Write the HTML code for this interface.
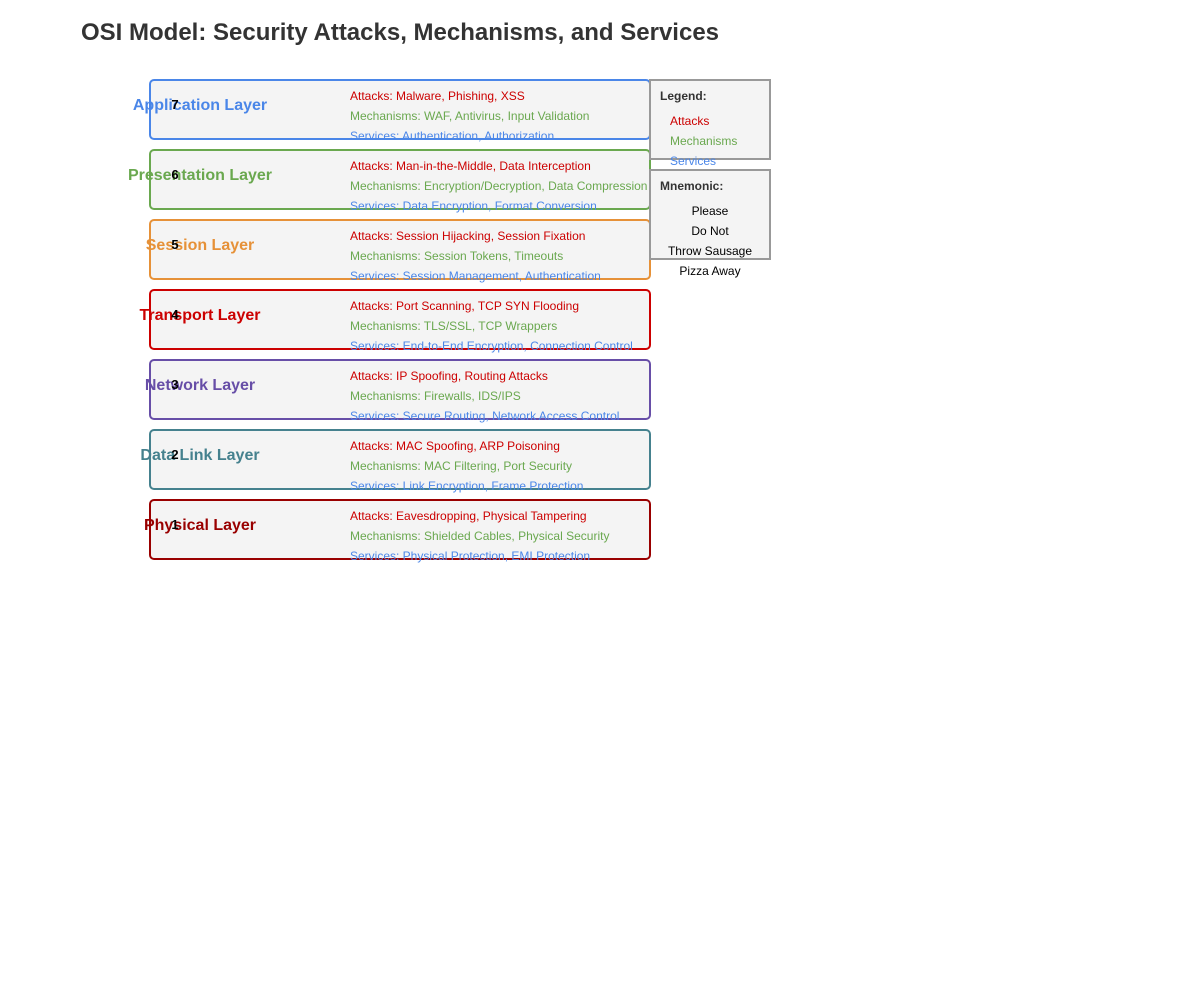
<!DOCTYPE html>
<html><head><meta charset="utf-8"><style>
html,body{margin:0;padding:0;background:#fff;width:1200px;height:1000px;overflow:hidden}
svg{display:block;font-family:"Liberation Sans",Arial,sans-serif}
</style></head><body>
<svg width="1200" height="1000" xmlns="http://www.w3.org/2000/svg">
<text x="81" y="40" font-size="24" font-weight="bold" fill="#333">OSI Model: Security Attacks, Mechanisms, and Services</text>

<g font-size="12">
<!-- layer 7 -->
<rect x="150" y="80" width="500" height="59" rx="4" fill="#f4f4f4" stroke="#4a86e8" stroke-width="2"/>
<text x="200" y="110" font-size="16" font-weight="bold" fill="#4a86e8" text-anchor="middle">Application Layer</text>
<text x="175" y="109" font-size="13" font-weight="bold" fill="#000" text-anchor="middle">7</text>
<text x="350" y="100" fill="#cc0000">Attacks: Malware, Phishing, XSS</text>
<text x="350" y="120" fill="#6aa84f">Mechanisms: WAF, Antivirus, Input Validation</text>
<text x="350" y="140" fill="#4a86e8">Services: Authentication, Authorization</text>
<!-- 6 -->
<rect x="150" y="150" width="500" height="59" rx="4" fill="#f4f4f4" stroke="#6aa84f" stroke-width="2"/>
<text x="200" y="180" font-size="16" font-weight="bold" fill="#6aa84f" text-anchor="middle">Presentation Layer</text>
<text x="175" y="179" font-size="13" font-weight="bold" fill="#000" text-anchor="middle">6</text>
<text x="350" y="170" fill="#cc0000">Attacks: Man-in-the-Middle, Data Interception</text>
<text x="350" y="190" fill="#6aa84f">Mechanisms: Encryption/Decryption, Data Compression</text>
<text x="350" y="210" fill="#4a86e8">Services: Data Encryption, Format Conversion</text>
<!-- 5 -->
<rect x="150" y="220" width="500" height="59" rx="4" fill="#f4f4f4" stroke="#e69138" stroke-width="2"/>
<text x="200" y="250" font-size="16" font-weight="bold" fill="#e69138" text-anchor="middle">Session Layer</text>
<text x="175" y="249" font-size="13" font-weight="bold" fill="#000" text-anchor="middle">5</text>
<text x="350" y="240" fill="#cc0000">Attacks: Session Hijacking, Session Fixation</text>
<text x="350" y="260" fill="#6aa84f">Mechanisms: Session Tokens, Timeouts</text>
<text x="350" y="280" fill="#4a86e8">Services: Session Management, Authentication</text>
<!-- 4 -->
<rect x="150" y="290" width="500" height="59" rx="4" fill="#f4f4f4" stroke="#cc0000" stroke-width="2"/>
<text x="200" y="320" font-size="16" font-weight="bold" fill="#cc0000" text-anchor="middle">Transport Layer</text>
<text x="175" y="319" font-size="13" font-weight="bold" fill="#000" text-anchor="middle">4</text>
<text x="350" y="310" fill="#cc0000">Attacks: Port Scanning, TCP SYN Flooding</text>
<text x="350" y="330" fill="#6aa84f">Mechanisms: TLS/SSL, TCP Wrappers</text>
<text x="350" y="350" fill="#4a86e8">Services: End-to-End Encryption, Connection Control</text>
<!-- 3 -->
<rect x="150" y="360" width="500" height="59" rx="4" fill="#f4f4f4" stroke="#674ea7" stroke-width="2"/>
<text x="200" y="390" font-size="16" font-weight="bold" fill="#674ea7" text-anchor="middle">Network Layer</text>
<text x="175" y="389" font-size="13" font-weight="bold" fill="#000" text-anchor="middle">3</text>
<text x="350" y="380" fill="#cc0000">Attacks: IP Spoofing, Routing Attacks</text>
<text x="350" y="400" fill="#6aa84f">Mechanisms: Firewalls, IDS/IPS</text>
<text x="350" y="420" fill="#4a86e8">Services: Secure Routing, Network Access Control</text>
<!-- 2 -->
<rect x="150" y="430" width="500" height="59" rx="4" fill="#f4f4f4" stroke="#45818e" stroke-width="2"/>
<text x="200" y="460" font-size="16" font-weight="bold" fill="#45818e" text-anchor="middle">Data Link Layer</text>
<text x="175" y="459" font-size="13" font-weight="bold" fill="#000" text-anchor="middle">2</text>
<text x="350" y="450" fill="#cc0000">Attacks: MAC Spoofing, ARP Poisoning</text>
<text x="350" y="470" fill="#6aa84f">Mechanisms: MAC Filtering, Port Security</text>
<text x="350" y="490" fill="#4a86e8">Services: Link Encryption, Frame Protection</text>
<!-- 1 -->
<rect x="150" y="500" width="500" height="59" rx="4" fill="#f4f4f4" stroke="#990000" stroke-width="2"/>
<text x="200" y="530" font-size="16" font-weight="bold" fill="#990000" text-anchor="middle">Physical Layer</text>
<text x="175" y="529" font-size="13" font-weight="bold" fill="#000" text-anchor="middle">1</text>
<text x="350" y="520" fill="#cc0000">Attacks: Eavesdropping, Physical Tampering</text>
<text x="350" y="540" fill="#6aa84f">Mechanisms: Shielded Cables, Physical Security</text>
<text x="350" y="560" fill="#4a86e8">Services: Physical Protection, EMI Protection</text>

<!-- legend -->
<rect x="650" y="80" width="120" height="79" fill="#f4f4f4" stroke="#999" stroke-width="2"/>
<text x="660" y="100" font-weight="bold" fill="#333">Legend:</text>
<text x="670" y="125" fill="#cc0000">Attacks</text>
<text x="670" y="145" fill="#6aa84f">Mechanisms</text>
<text x="670" y="165" fill="#4a86e8">Services</text>

<rect x="650" y="170" width="120" height="89" fill="#f4f4f4" stroke="#999" stroke-width="2"/>
<text x="660" y="190" font-weight="bold" fill="#333">Mnemonic:</text>
<text x="710" y="215" fill="#000" text-anchor="middle">Please</text>
<text x="710" y="235" fill="#000" text-anchor="middle">Do Not</text>
<text x="710" y="255" fill="#000" text-anchor="middle">Throw Sausage</text>
<text x="710" y="275" fill="#000" text-anchor="middle">Pizza Away</text>
</g>
</svg>
</body></html>
